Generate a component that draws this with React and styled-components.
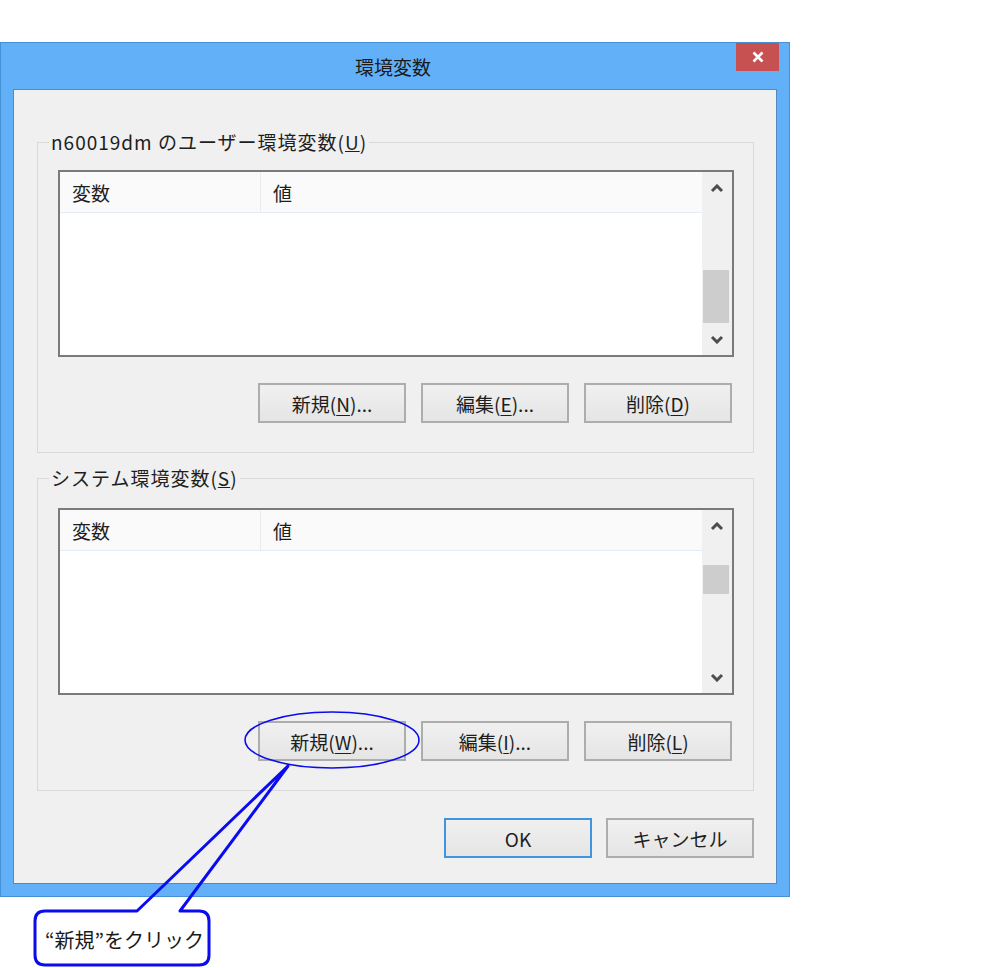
import styled, { createGlobalStyle } from 'styled-components';

const GlobalStyle = createGlobalStyle`
  body {
    margin: 0;
    background: #ffffff;
    font-family: "Noto Sans CJK JP", "Noto Sans", sans-serif;
    color: #1e1e1e;
  }
`;

const Page = styled.div`
  position: relative;
  width: 982px;
  height: 968px;
  padding-top: 42px;
  box-sizing: border-box;
  overflow: hidden;
`;

const Window = styled.section`
  width: 790px;
  box-sizing: border-box;
  background: #62b0f8;
  border: 1px solid #4590d6;
  padding: 0 12px 12px;
`;

const TitleBar = styled.header`
  height: 46px;
  margin: 0 -12px;
  padding-right: 10px;
  display: grid;
  grid-template-columns: 1fr auto 1fr;
  align-items: center;
`;

const Title = styled.h1`
  grid-column: 2;
  margin: 0;
  font-size: 19px;
  font-weight: normal;
  color: #1a1a1a;
  padding-left: 6px;
`;

const CloseButton = styled.button`
  grid-column: 3;
  justify-self: end;
  align-self: start;
  width: 43px;
  height: 28px;
  border: none;
  padding: 0;
  background: #c75050;
  display: flex;
  align-items: center;
  justify-content: center;
`;

const Client = styled.div`
  background: #f0f0f0;
  border: 1px solid #5688c0;
  padding: 39px 22px 25px 23px;
`;

const Group = styled.fieldset`
  margin: ${(props) => props.$top}px 0 0;
  padding: 0 19px 29px 20px;
  border: 1px solid #d9d9d9;
  min-width: 0;
`;

const Legend = styled.legend`
  margin-left: -9px;
  padding: 0 2px;
  font-size: 19px;
  line-height: 26px;
  letter-spacing: 1px;
  color: #1e1e1e;
`;

const ListBox = styled.div`
  margin-top: ${(props) => props.$top}px;
  height: 187px;
  box-sizing: border-box;
  border: 2px solid #7a7a7a;
  background: #ffffff;
  display: grid;
  grid-template-columns: 1fr 30px;
`;

const ListContent = styled.div`
  display: flex;
  flex-direction: column;
`;

const HeaderRow = styled.div`
  height: 41px;
  box-sizing: border-box;
  display: grid;
  grid-template-columns: 201px 1fr;
  background: #fafafa;
  border-bottom: 1px solid #e3ecf7;
`;

const HeaderCell = styled.div`
  display: flex;
  align-items: center;
  padding-left: 12px;
  font-size: 19px;
  color: #1e1e1e;
  border-right: ${(props) => (props.$divider ? '1px solid #ebebeb' : 'none')};
`;

const ScrollBar = styled.div`
  background: #f0f0f0;
  display: flex;
  flex-direction: column;
`;

const ArrowButton = styled.div`
  height: 32px;
  flex: none;
  display: flex;
  align-items: center;
  justify-content: center;
`;

const Track = styled.div`
  flex: 1;
  padding: 0 3px 0 1px;
`;

const Thumb = styled.div`
  background: #cdcdcd;
`;

const ButtonRow = styled.div`
  display: flex;
  justify-content: flex-end;
  gap: ${(props) => props.$gap || 15}px;
  margin-top: ${(props) => props.$top}px;
  padding-right: ${(props) => props.$right || 0}px;
`;

const Button = styled.button`
  width: 148px;
  height: 40px;
  box-sizing: border-box;
  border: 2px solid ${(props) => (props.$default ? '#3f95de' : '#adadad')};
  background: linear-gradient(#f0f0f0, #e5e5e5);
  font-family: inherit;
  font-size: 19px;
  color: #1e1e1e;
  padding: 0;

  u {
    text-underline-offset: 3px;
  }
`;

const Callout = styled.div`
  margin: 15px 0 0 35px;
  width: 174px;
  height: 55px;
  box-sizing: border-box;
  padding-left: 10px;
  display: flex;
  align-items: center;
  font-size: 20px;
  white-space: nowrap;
  color: #1a1a1a;
`;

const Annotation = styled.svg`
  position: absolute;
  top: 0;
  left: 0;
  pointer-events: none;
`;

function Chevron({ down }) {
  return (
    <svg width="14" height="9" viewBox="0 0 14 9">
      <path
        d={down ? 'M2 2 L7 7 L12 2' : 'M2 7 L7 2 L12 7'}
        fill="none"
        stroke="#4d4d4d"
        strokeWidth="3"
      />
    </svg>
  );
}

function VariableList({ top, thumbTop, thumbSize }) {
  return (
    <ListBox $top={top}>
      <ListContent>
        <HeaderRow>
          <HeaderCell $divider>変数</HeaderCell>
          <HeaderCell>値</HeaderCell>
        </HeaderRow>
      </ListContent>
      <ScrollBar>
        <ArrowButton>
          <Chevron />
        </ArrowButton>
        <Track>
          <Thumb style={{ marginTop: thumbTop, height: thumbSize }} />
        </Track>
        <ArrowButton>
          <Chevron down />
        </ArrowButton>
      </ScrollBar>
    </ListBox>
  );
}

export default function App() {
  return (
    <Page>
      <GlobalStyle />
      <Window>
        <TitleBar>
          <Title>環境変数</Title>
          <CloseButton type="button" aria-label="閉じる">
            <svg width="12" height="12" viewBox="0 0 12 12">
              <path d="M1.5 1.5 L10.5 10.5 M10.5 1.5 L1.5 10.5" stroke="#ffffff" strokeWidth="2.6" />
            </svg>
          </CloseButton>
        </TitleBar>
        <Client>
          <Group $top={0}>
            <Legend>
              n60019dm のユーザー環境変数(
              <u>U</u>
              )
            </Legend>
            <VariableList top={15} thumbTop={66} thumbSize={53} />
            <ButtonRow $top={26} $right={2}>
              <Button type="button">新規(<u>N</u>)...</Button>
              <Button type="button">編集(<u>E</u>)...</Button>
              <Button type="button">削除(<u>D</u>)</Button>
            </ButtonRow>
          </Group>
          <Group $top={12}>
            <Legend>
              システム環境変数(
              <u>S</u>
              )
            </Legend>
            <VariableList top={17} thumbTop={23} thumbSize={29} />
            <ButtonRow $top={26} $right={2}>
              <Button type="button">新規(<u>W</u>)...</Button>
              <Button type="button">編集(<u>I</u>)...</Button>
              <Button type="button">削除(<u>L</u>)</Button>
            </ButtonRow>
          </Group>
          <ButtonRow $top={27} $gap={14}>
            <Button type="button" $default>OK</Button>
            <Button type="button">キャンセル</Button>
          </ButtonRow>
        </Client>
      </Window>
      <Callout>“新規”をクリック</Callout>
      <Annotation width="982" height="968" viewBox="0 0 982 968">
        <ellipse cx="332" cy="740" rx="87" ry="28" fill="none" stroke="#0b0bef" strokeWidth="1.6" />
        <path
          d="M137 911 L288 766 L180 911 L199 911 Q209 911 209 921 L209 955 Q209 965 199 965 L45 965 Q35 965 35 955 L35 921 Q35 911 45 911 Z"
          fill="none"
          stroke="#0b0bef"
          strokeWidth="3"
          strokeLinejoin="round"
        />
      </Annotation>
    </Page>
  );
}
